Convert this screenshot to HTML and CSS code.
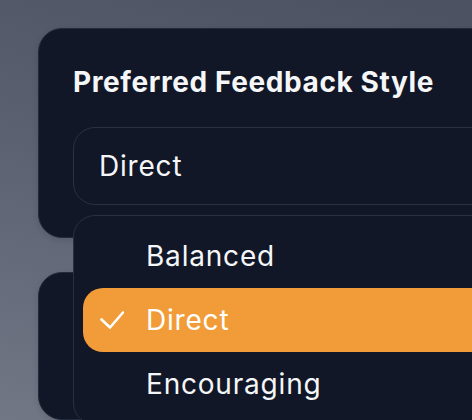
FILE: index.html
```html
<!DOCTYPE html>
<html lang="en">
<head>
<meta charset="utf-8">
<title>Preferred Feedback Style</title>
<link rel="stylesheet" href="styles.css">
</head>
<body>
<main class="page">
  <section class="card">
    <h2 class="card-title">Preferred Feedback Style</h2>
    <div class="select-wrap">
      <div class="select">Direct</div>
      <ul class="menu">
        <li class="option"><span class="check"></span><span>Balanced</span></li>
        <li class="option selected"><span class="check"><svg viewBox="0 0 24 18" width="24" height="18"><polyline points="1.5,8.5 10,16.5 23,1.5" fill="none" stroke="#ffffff" stroke-width="2.6" stroke-linecap="round" stroke-linejoin="round"/></svg></span><span>Direct</span></li>
        <li class="option"><span class="check"></span><span>Encouraging</span></li>
      </ul>
    </div>
  </section>
  <section class="card card-second"></section>
</main>
</body>
</html>
```
FILE: styles.css
```css
* { box-sizing: border-box; }
html, body { height: 100%; }
body {
  margin: 0;
  overflow: hidden;
  font-family: "Inter", "Noto Sans", sans-serif;
  color: #f5f6f8;
  background: linear-gradient(195deg, #4b5161 0%, #5a6070 45%, #727786 100%);
}
.page {
  display: flex;
  flex-direction: column;
  gap: 34px;
  padding: 28px 0 0 38px;
  width: 640px;
}
.card {
  width: 580px;
  background: #111727;
  border: 1px solid #222b3b;
  border-radius: 24px;
  padding: 36px 0 32px 34px;
  box-shadow: 0 2px 6px rgba(0, 0, 0, 0.12);
}
.card-title {
  margin: 0;
  font-size: 28px;
  line-height: 34px;
  font-weight: 700;
  letter-spacing: 0.6px;
}
.select-wrap {
  position: relative;
  margin-top: 28px;
}
.select {
  height: 78px;
  display: flex;
  align-items: center;
  padding-left: 25px;
  border: 1px solid #283244;
  border-radius: 22px;
  font-size: 28px;
  letter-spacing: 0.8px;
}
.menu {
  position: absolute;
  top: calc(100% + 10px);
  left: 0;
  right: 0;
  margin: 0;
  padding: 8px 0 8px 9px;
  list-style: none;
  background: #111727;
  border: 1px solid #273143;
  border-radius: 22px;
  z-index: 2;
}
.option {
  height: 64px;
  display: flex;
  align-items: center;
  padding-left: 17px;
  font-size: 28px;
  letter-spacing: 0.8px;
  border-radius: 20px;
}
.option.selected {
  background: #f19c38;
  color: #ffffff;
}
.check {
  width: 46px;
  height: 18px;
  display: flex;
  align-items: center;
  flex-shrink: 0;
}
.check svg { display: block; }
.card-second {
  height: 148px;
  padding: 0;
}
```
